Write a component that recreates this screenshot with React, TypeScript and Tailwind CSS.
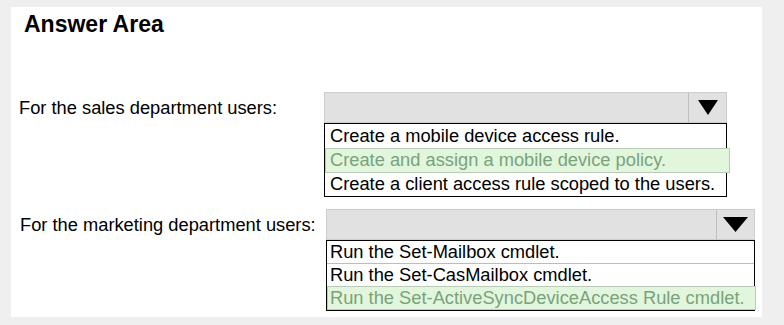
const font = { fontFamily: '"Liberation Sans", Arial, sans-serif' };

function Arrow({ w }: { w: number }) {
  return (
    <svg width={w} height={15} viewBox={`0 0 ${w} 15`}>
      <polygon points={`0,0 ${w},0 ${w / 2},15`} fill="#000" />
    </svg>
  );
}

function SelectBox({ width, arrowW }: { width: string; arrowW: number }) {
  return (
    <div className={`flex h-[31px] ${width} border border-[#cdcdcd] bg-[#e1e1e1]`}>
      <div className="flex-1" />
      <div className="flex w-[38px] items-center justify-center border-l border-[#bdbdbd]">
        <Arrow w={arrowW} />
      </div>
    </div>
  );
}

export default function App() {
  return (
    <div
      className="h-[325px] w-[784px] bg-[#efefef] pl-[11px] pt-[7px] text-[18.3px] text-black"
      style={font}
    >
      <div className="h-[310px] w-[751px] bg-white">
        <h1 className="pl-[13px] pt-[6px] text-[23px] font-bold leading-[22px]">Answer Area</h1>

        {/* sales */}
        <div className="mt-[57px] flex">
          <div className="flex h-[31px] w-[313px] items-center pl-[8px]">
            For the sales department users:
          </div>
          <div className="flex flex-col">
            <SelectBox width="w-[403px]" arrowW={20} />
            <div className="flex w-[403px] flex-col border border-black leading-none">
              <div className="flex h-[24px] items-center pl-[5px]">Create a mobile device access rule.</div>
              <div className="-mr-[4px] flex h-[25px] items-center border border-[#b9cdb6] bg-[#e2f6de] pl-[4px] text-[#79a379]">
                Create and assign a mobile device policy.
              </div>
              <div className="flex h-[23px] items-center pl-[5px]">
                Create a client access rule scoped to the users.
              </div>
            </div>
          </div>
        </div>

        {/* marketing */}
        <div className="mt-[12px] flex">
          <div className="flex h-[32px] w-[315px] items-center pl-[9px]">
            For the marketing department users:
          </div>
          <div className="flex flex-col">
            <SelectBox width="w-[429px]" arrowW={25} />
            <div className="flex w-[429px] flex-col border border-black leading-none">
              <div className="flex h-[23px] items-center border-b border-[#bcbcbc] pl-[3px]">
                Run the Set-Mailbox cmdlet.
              </div>
              <div className="flex h-[22px] items-center pl-[3px]">Run the Set-CasMailbox cmdlet.</div>
              <div className="-mr-[2px] flex h-[24px] items-center border border-[#b9cdb6] bg-[#e2f6de] pl-[2px] text-[#79a379]">
                Run the Set-ActiveSyncDeviceAccess Rule cmdlet.
              </div>
            </div>
          </div>
        </div>
      </div>
    </div>
  );
}
